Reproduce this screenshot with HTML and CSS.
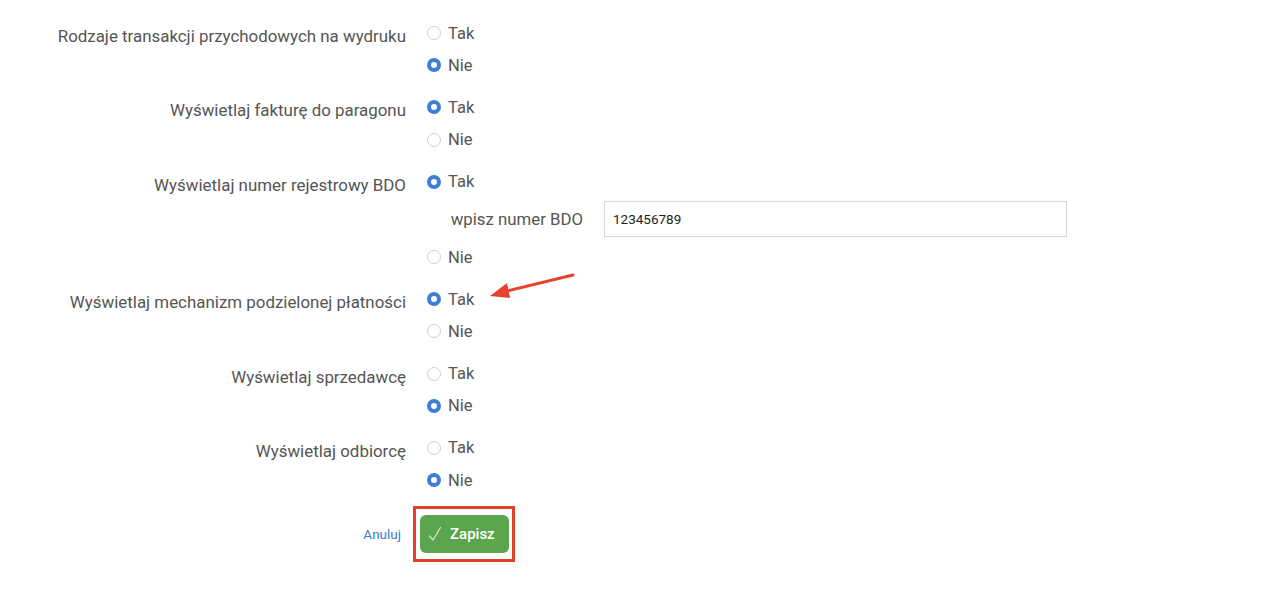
FILE: index.html
```html
<!DOCTYPE html>
<html lang="pl">
<head>
  <meta charset="UTF-8" />
  <meta name="viewport" content="width=device-width, initial-scale=1.0" />
  <link rel="stylesheet" href="styles.css">
</head>
<body>
  <form class="settings">
    <div class="row">
      <div class="row-label">Rodzaje transakcji przychodowych na wydruku</div>
      <div class="options">
        <label class="option"><input type="radio" name="r1" />Tak</label>
        <label class="option"><input type="radio" name="r1" checked />Nie</label>
      </div>
    </div>

    <div class="row">
      <div class="row-label">Wyświetlaj fakturę do paragonu</div>
      <div class="options">
        <label class="option"><input type="radio" name="r2" checked />Tak</label>
        <label class="option"><input type="radio" name="r2" />Nie</label>
      </div>
    </div>

    <div class="row">
      <div class="row-label">Wyświetlaj numer rejestrowy BDO</div>
      <div class="options">
        <label class="option"><input type="radio" name="r3" checked />Tak</label>
        <div class="sub-field">
          <span class="sub-label">wpisz numer BDO</span>
          <input type="text" class="text-input" value="123456789" />
        </div>
        <label class="option"><input type="radio" name="r3" />Nie</label>
      </div>
    </div>

    <div class="row">
      <div class="row-label">Wyświetlaj mechanizm podzielonej płatności</div>
      <div class="options">
        <div class="marked">
          <label class="option"><input type="radio" name="r4" checked />Tak</label>
          <svg class="arrow" width="90" height="30" viewBox="0 0 90 30">
            <line x1="86" y1="3" x2="16" y2="20" stroke="#e5432b" stroke-width="3" stroke-linecap="round" />
            <polygon points="3,24 20,11 23,26" fill="#e5432b" />
          </svg>
        </div>
        <label class="option"><input type="radio" name="r4" />Nie</label>
      </div>
    </div>

    <div class="row">
      <div class="row-label">Wyświetlaj sprzedawcę</div>
      <div class="options">
        <label class="option"><input type="radio" name="r5" />Tak</label>
        <label class="option"><input type="radio" name="r5" checked />Nie</label>
      </div>
    </div>

    <div class="row">
      <div class="row-label">Wyświetlaj odbiorcę</div>
      <div class="options">
        <label class="option"><input type="radio" name="r6" />Tak</label>
        <label class="option"><input type="radio" name="r6" checked />Nie</label>
      </div>
    </div>

    <div class="row actions">
      <div class="row-label"><a href="#" class="cancel">Anuluj</a></div>
      <div class="highlight">
        <button type="button" class="save">
          <svg class="check" width="14" height="16" viewBox="0 0 14 16">
            <polyline points="1.5,10 5,14 12.5,1.5" fill="none" stroke="#c7e8bb" stroke-width="1.4" stroke-linecap="round" stroke-linejoin="round" />
          </svg>
          Zapisz
        </button>
      </div>
    </div>
  </form>
</body>
</html>
```

FILE: styles.css
```css
html, body {
  margin: 0;
  padding: 0;
  background-color: #ffffff;
  font-family: Roboto, "Liberation Sans", Arial, sans-serif;
  color: #555555;
}

.settings {
  padding-top: 17px;
}

.row {
  display: grid;
  grid-template-columns: 406px 1fr;
  column-gap: 21px;
  margin-bottom: 10px;
}

.row-label {
  text-align: right;
  font-size: 16.9px;
  line-height: 32px;
  padding-top: 3px;
}

.options {
  display: flex;
  flex-direction: column;
}

.option {
  display: flex;
  align-items: center;
  height: 32.2px;
  font-size: 16.5px;
  cursor: pointer;
}

.option input[type="radio"] {
  appearance: none;
  -webkit-appearance: none;
  width: 14px;
  height: 14px;
  margin: 0 7px 0 0;
  border: 1px solid #cfcfcf;
  border-radius: 50%;
  background-color: #ffffff;
  box-sizing: border-box;
}

.option input[type="radio"]:checked {
  border: 4px solid #3d7fd6;
}

.sub-field {
  display: flex;
  align-items: center;
  height: 43px;
  padding-left: 23px;
}

.sub-label {
  width: 133px;
  text-align: right;
  font-size: 16.8px;
  margin-right: 21px;
  white-space: nowrap;
}

.text-input {
  width: 463px;
  height: 36px;
  box-sizing: border-box;
  border: 1px solid #d6d6d6;
  padding: 0 8px;
  font-family: Roboto, "Liberation Sans", Arial, sans-serif;
  font-size: 13.5px;
  color: #222222;
  outline: none;
}

.marked {
  position: relative;
}

.arrow {
  position: absolute;
  left: 60px;
  top: -11px;
}

.actions .row-label {
  padding-top: 0;
  padding-right: 5px;
  display: flex;
  align-items: center;
  justify-content: flex-end;
}

.cancel {
  color: #3b7dc4;
  font-size: 13.5px;
  text-decoration: none;
}

.highlight {
  justify-self: start;
  margin-left: -14px;
  border: 3px solid #e1402a;
  padding: 6px 3px 6px 4px;
}

.save {
  display: flex;
  align-items: center;
  height: 38px;
  padding: 0 14px 0 8px;
  border: none;
  border-radius: 6px;
  background-color: #5ba54e;
  color: #ffffff;
  font-family: Roboto, "Liberation Sans", Arial, sans-serif;
  font-size: 15px;
  font-weight: 500;
  cursor: pointer;
}

.check {
  margin-right: 8px;
}
```
